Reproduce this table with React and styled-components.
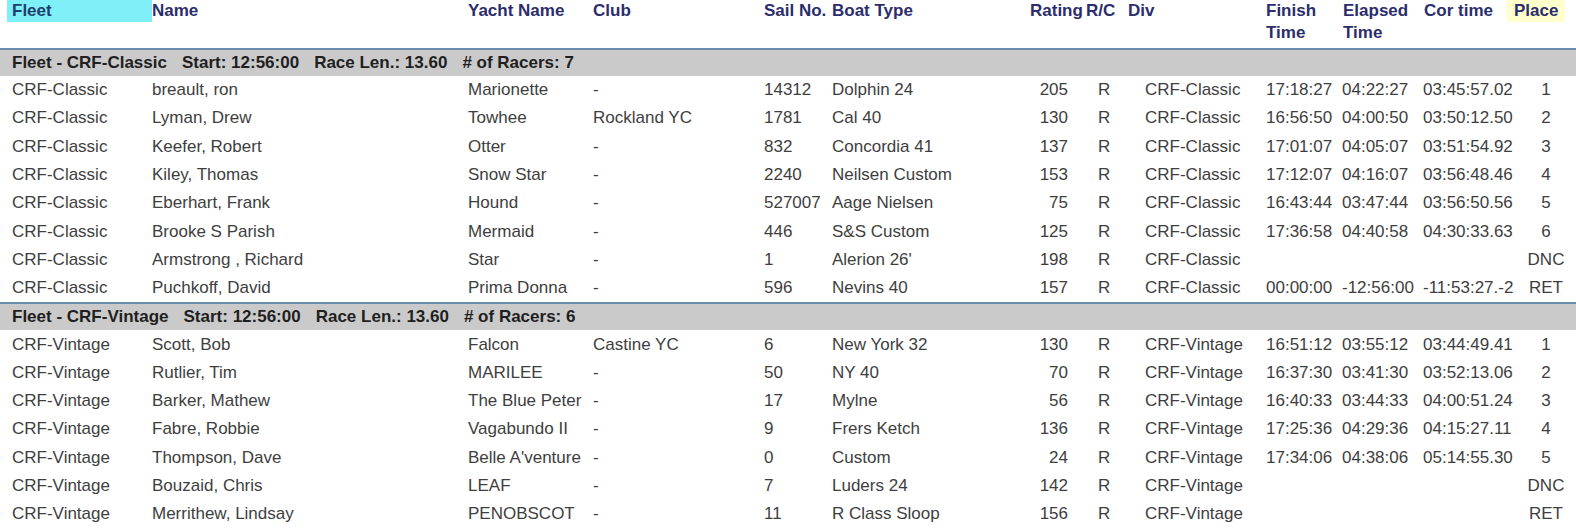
import React from "react";
import styled, { createGlobalStyle } from "styled-components";

const GRID = "140px 316px 125px 171px 68px 198px 54px 42px 138px 77px 81px 86px 76px";

const GlobalStyle = createGlobalStyle`
  html, body {
    margin: 0;
    padding: 0;
    background: #ffffff;
    overflow: hidden;
  }
  body {
    font-family: "Liberation Sans", Arial, sans-serif;
  }
`;

const columns = [
  { key: "fleet", label: "Fleet", tag: "fleet" },
  { key: "name", label: "Name" },
  { key: "yacht", label: "Yacht Name" },
  { key: "club", label: "Club" },
  { key: "sail", label: "Sail No." },
  { key: "boat", label: "Boat Type" },
  { key: "rating", label: "Rating", align: "right", pr: 16 },
  { key: "rc", label: "R/C", hpl: 2, pl: 14 },
  { key: "div", label: "Div", hpl: 2, pl: 19 },
  { key: "finish", label: ["Finish", "Time"], hpl: 2, pl: 2 },
  { key: "elapsed", label: ["Elapsed", "Time"], hpl: 2, pl: 1 },
  { key: "cor", label: "Cor time", hpl: 2, pl: 1 },
  { key: "place", label: "Place", tag: "place", align: "center" },
];

const groups = [
  {
    fleet: "CRF-Classic",
    start: "12:56:00",
    len: "13.60",
    racers: 7,
    rows: [
      ["breault, ron", "Marionette", "-", "14312", "Dolphin 24", "205", "17:18:27", "04:22:27", "03:45:57.02", "1"],
      ["Lyman, Drew", "Towhee", "Rockland YC", "1781", "Cal 40", "130", "16:56:50", "04:00:50", "03:50:12.50", "2"],
      ["Keefer, Robert", "Otter", "-", "832", "Concordia 41", "137", "17:01:07", "04:05:07", "03:51:54.92", "3"],
      ["Kiley, Thomas", "Snow Star", "-", "2240", "Neilsen Custom", "153", "17:12:07", "04:16:07", "03:56:48.46", "4"],
      ["Eberhart, Frank", "Hound", "-", "527007", "Aage Nielsen", "75", "16:43:44", "03:47:44", "03:56:50.56", "5"],
      ["Brooke S Parish", "Mermaid", "-", "446", "S&S Custom", "125", "17:36:58", "04:40:58", "04:30:33.63", "6"],
      ["Armstrong , Richard", "Star", "-", "1", "Alerion 26'", "198", "", "", "", "DNC"],
      ["Puchkoff, David", "Prima Donna", "-", "596", "Nevins 40", "157", "00:00:00", "-12:56:00", "-11:53:27.-2", "RET"],
    ],
  },
  {
    fleet: "CRF-Vintage",
    start: "12:56:00",
    len: "13.60",
    racers: 6,
    rows: [
      ["Scott, Bob", "Falcon", "Castine YC", "6", "New York 32", "130", "16:51:12", "03:55:12", "03:44:49.41", "1"],
      ["Rutlier, Tim", "MARILEE", "-", "50", "NY 40", "70", "16:37:30", "03:41:30", "03:52:13.06", "2"],
      ["Barker, Mathew", "The Blue Peter", "-", "17", "Mylne", "56", "16:40:33", "03:44:33", "04:00:51.24", "3"],
      ["Fabre, Robbie", "Vagabundo II", "-", "9", "Frers Ketch", "136", "17:25:36", "04:29:36", "04:15:27.11", "4"],
      ["Thompson, Dave", "Belle A'venture", "-", "0", "Custom", "24", "17:34:06", "04:38:06", "05:14:55.30", "5"],
      ["Bouzaid, Chris", "LEAF", "-", "7", "Luders 24", "142", "", "", "", "DNC"],
      ["Merrithew, Lindsay", "PENOBSCOT", "-", "11", "R Class Sloop", "156", "", "", "", "RET"],
    ],
  },
];

export default function App() {
  return (
    <Page>
      <GlobalStyle />
      <HeaderRow>
        {columns.map((c) => (
          <HeadCell key={c.key} $pl={c.hpl || 0}>
            {c.tag === "fleet" && <FleetTag>{c.label}</FleetTag>}
            {c.tag === "place" && <PlaceTag>{c.label}</PlaceTag>}
            {!c.tag && (Array.isArray(c.label) ? c.label.map((l) => <div key={l}>{l}</div>) : c.label)}
          </HeadCell>
        ))}
      </HeaderRow>

      {groups.map((g) => (
        <section key={g.fleet}>
          <GroupBar>
            <span>Fleet - {g.fleet}</span>
            <span>Start: {g.start}</span>
            <span>Race Len.: {g.len}</span>
            <span># of Racers: {g.racers}</span>
          </GroupBar>
          {g.rows.map((r) => {
            const values = [g.fleet, r[0], r[1], r[2], r[3], r[4], r[5], "R", g.fleet, r[6], r[7], r[8], r[9]];
            return (
              <Row key={r[0]}>
                {columns.map((c, i) => (
                  <Cell key={c.key} $align={c.align} $pl={c.pl || 0} $pr={c.pr || 0}>
                    {values[i]}
                  </Cell>
                ))}
              </Row>
            );
          })}
        </section>
      ))}
    </Page>
  );
}

const Page = styled.div`
  width: 1576px;
  height: 532px;
  overflow: hidden;
  background: #fff;
`;

const HeaderRow = styled.div`
  display: grid;
  grid-template-columns: ${GRID};
  padding-left: 12px;
  height: 48px;
  font-size: 17px;
  font-weight: bold;
  line-height: 22px;
  color: #2b2d6c;
`;

const HeadCell = styled.div`
  padding-left: ${(p) => p.$pl}px;
  white-space: nowrap;
`;

const FleetTag = styled.span`
  display: block;
  height: 22px;
  margin-left: -5px;
  padding: 0 5px;
  background: #7ff0f7;
  color: #1d3f6e;
`;

const PlaceTag = styled.span`
  display: inline-block;
  height: 22px;
  margin-left: -1px;
  padding: 0 7px;
  background: #ffffcc;
`;

const GroupBar = styled.div`
  display: flex;
  gap: 15px;
  align-items: center;
  height: 26px;
  padding-left: 12px;
  border-top: 2px solid #6a8bab;
  background: #cacaca;
  font-size: 17px;
  font-weight: bold;
  color: #1f1f1f;
  white-space: nowrap;
`;

const Row = styled.div`
  display: grid;
  grid-template-columns: ${GRID};
  padding-left: 12px;
  height: 28.3px;
  align-items: center;
  font-size: 17px;
  color: #3e3e3e;
`;

const Cell = styled.div`
  text-align: ${(p) => p.$align || "left"};
  padding-left: ${(p) => p.$pl}px;
  padding-right: ${(p) => p.$pr}px;
  white-space: nowrap;
`;
